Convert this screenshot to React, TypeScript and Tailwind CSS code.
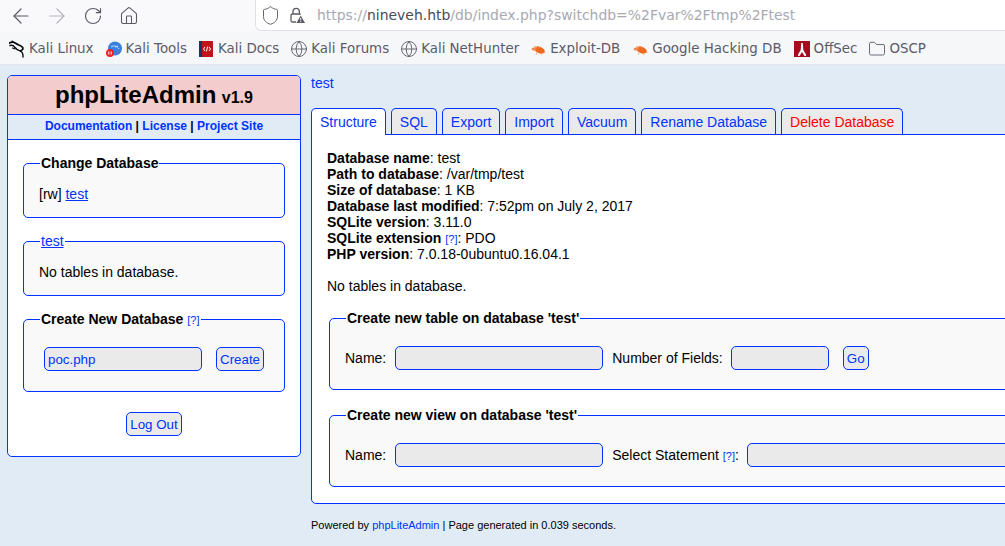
import { ArrowLeft, ArrowRight, Folder, Globe, Home, RotateCw, Shield } from "lucide-react";
import type { ReactNode } from "react";

function DragonIcon() {
  return (
    <svg viewBox="0 0 16 18" className="h-[18px] w-4 shrink-0" fill="none" stroke="#0c0c0c" strokeLinecap="round">
      <path d="M0.500 3c2-1.200 4.500-1 6.500.5 2 1.500 5 1.800 6.500 3.800 1 1.500 0 3-2 3.500" strokeWidth="1.700" />
      <path d="M1 5.500c2-.5 3.500 0 4.500 1.500 1.500 2 3.500 3.500 6 4.200 1.700.8 2.700 2.800 2.500 5.800" strokeWidth="1.400" />
      <path d="M3 1l2.500 1.800M3.500 8l2.500 1" strokeWidth="1.100" />
    </svg>
  );
}

function ToolsIcon() {
  return (
    <svg viewBox="0 0 16 16" className="h-4 w-4 shrink-0">
      <circle cx="9" cy="7.500" r="7" fill="#3a80e0" />
      <path d="M5 6c3-2 6-1 8 2M9 6l3-1" stroke="#cfe2fa" strokeWidth="0.900" fill="none" />
      <circle cx="4" cy="12" r="4" fill="#e8232a" />
      <path d="M2.800 10.500v3M5.200 10.500v3" stroke="#fff" strokeWidth="1" />
    </svg>
  );
}

function DocsIcon() {
  return (
    <svg viewBox="0 0 15 16" className="h-4 w-[15px] shrink-0">
      <rect x="0" y="0" width="14" height="16" rx="0.500" fill="#c0141c" />
      <rect x="0" y="0" width="3" height="16" fill="#1c2f6e" />
      <path d="M6 6L4.500 8 6 10M10 6l1.500 2L10 10M8.700 5.500L7.400 10.500" stroke="#fff" strokeWidth="1" fill="none" />
    </svg>
  );
}

function RoachIcon() {
  return (
    <svg viewBox="0 0 16 16" className="h-4 w-4 shrink-0">
      <ellipse cx="9.500" cy="9" rx="5.500" ry="3.300" fill="#ee6a1f" transform="rotate(20 9.500 9)" />
      <ellipse cx="4" cy="8" rx="2.500" ry="1.600" fill="#f28a4f" />
      <path d="M4 5l3 2M9 5.500l1 1.500M7 11.500L6 14M11 12l1 2M14 11l1.500 1" stroke="#f2a070" strokeWidth="0.800" fill="none" />
    </svg>
  );
}

function OffSecIcon() {
  return (
    <svg viewBox="0 0 16 16" className="h-4 w-4 shrink-0">
      <rect width="16" height="16" fill="#a50d1e" />
      <path d="M7.200 2h1.600l.5 7 2.700 4.500V15h-1.500L8 11l-2.500 4H4v-1.500L6.700 9z" fill="#fff" />
    </svg>
  );
}

function LockWarnIcon() {
  return (
    <svg viewBox="0 0 16 16" className="h-4 w-4" fill="none">
      <path d="M4 7V4.500a3.200 3.200 0 0 1 6.400 0V7" stroke="#5b5b66" strokeWidth="1.300" />
      <path d="M7 15H3.500A1.500 1.500 0 0 1 2 13.500v-5A1.500 1.500 0 0 1 3.500 7h7c.6 0 1 .2 1.200.5" stroke="#5b5b66" strokeWidth="1.300" />
      <path d="M11.700 8.500L16 16H7.400z" fill="#5b5b66" />
      <path d="M11.700 11v2.300M11.700 14.100v.9" stroke="#fff" strokeWidth="1" />
    </svg>
  );
}

const globe = <Globe size={18} strokeWidth={1.2} className="-mx-px shrink-0" />;

const bookmarks: { label: string; icon: ReactNode; left: string }[] = [
  { label: "Kali Linux", icon: <DragonIcon />, left: "ml-[9px]" },
  { label: "Kali Tools", icon: <ToolsIcon />, left: "ml-[12px]" },
  { label: "Kali Docs", icon: <DocsIcon />, left: "ml-[12px]" },
  { label: "Kali Forums", icon: globe, left: "ml-[12px]" },
  { label: "Kali NetHunter", icon: globe, left: "ml-[12px]" },
  { label: "Exploit-DB", icon: <RoachIcon />, left: "ml-[11px]" },
  { label: "Google Hacking DB", icon: <RoachIcon />, left: "ml-[12px]" },
  { label: "OffSec", icon: <OffSecIcon />, left: "ml-[12px]" },
  { label: "OSCP", icon: <Folder size={18} strokeWidth={1.2} className="-mx-px shrink-0" />, left: "ml-[12px]" },
];

const tabs = ["SQL", "Export", "Import", "Vacuum", "Rename Database"];

function BrowserChrome() {
  return (
    <div className="shrink-0 font-['DejaVu_Sans',sans-serif] text-[#5b5b66]">
      <div className="flex h-[31px] items-center bg-[#f9f9fb]">
        <div className="flex w-[255px] items-center pl-[9px]">
          <ArrowLeft size={24} strokeWidth={1.2} />
          <ArrowRight size={24} strokeWidth={1.2} className="ml-[12px] text-[#b4b4ba]" />
          <RotateCw size={20} strokeWidth={1.4} className="ml-[14px]" />
          <Home size={20} strokeWidth={1.3} className="ml-[16px]" />
        </div>
        <div className="flex h-[31px] flex-1 items-center rounded-bl-md border-b border-l border-[#dfe1e8] bg-white pl-[4px]">
          <Shield size={21} strokeWidth={1.1} />
          <span className="ml-[8px]"><LockWarnIcon /></span>
          <span className="ml-[12px] whitespace-nowrap text-[13.95px] text-[#a9a9b2]">
            https://<span className="text-[#4a4a54]">nineveh.htb</span>/db/index.php?switchdb=%2Fvar%2Ftmp%2Ftest
          </span>
        </div>
      </div>
      <div className="flex h-[34px] items-center border-b border-[#e3e5ea] bg-[#f6f7f9] pt-[4px] text-[13.4px]">
        {bookmarks.map((b) => (
          <div key={b.label} className={`flex items-center gap-[4px] whitespace-nowrap ${b.left}`}>
            {b.icon}
            <span>{b.label}</span>
          </div>
        ))}
      </div>
    </div>
  );
}

function Box({ legend, className, children }: { legend: ReactNode; className: string; children: ReactNode }) {
  return (
    <fieldset className={`rounded-[5px] border border-[#0033ff] bg-[#f9f9f9] ${className}`}>
      <legend className="ml-[1px] px-[1px] text-[14px] leading-[16px] font-bold">{legend}</legend>
      {children}
    </fieldset>
  );
}

function Help() {
  return <a className="text-[11px] leading-none font-normal text-[#0033ff]">[?]</a>;
}

const inputClass = "box-border h-[24px] rounded-[5px] border border-[#0033ff] bg-[#eaeaea] px-[3px] text-[13.33px] text-[#0033ff]";
const buttonClass = "box-border h-[24px] rounded-[5px] border border-[#0033ff] bg-[#eaeaea] px-[3px] pt-[1px] text-[13.33px] text-[#0033ff]";

function Sidebar() {
  return (
    <aside className="h-[382px] w-[294px] shrink-0 overflow-hidden rounded-[5px] border border-[#0033ff] bg-white">
      <div className="h-[39px] border-b border-[#0033ff] bg-[#f3cdcd] text-center leading-[38px] font-bold">
        <span className="text-[24px]">phpLiteAdmin</span> <span className="ml-[1px] text-[16px]">v1.9</span>
      </div>
      <div className="h-[25px] border-b border-[#0033ff] bg-[#e0ebf6] text-center text-[12px] leading-[23px] font-bold">
        <a className="text-[#0033ff]">Documentation</a> | <a className="text-[#0033ff]">License</a> |{" "}
        <a className="text-[#0033ff]">Project Site</a>
      </div>
      <div className="px-[15px] pt-[15px]">
        <Box legend="Change Database" className="h-[63px] px-[15px]">
          <div className="pt-[15px] text-[14px] leading-[16px]">
            [rw] <a className="text-[#0033ff] underline">test</a>
          </div>
        </Box>
        <Box legend={<a className="font-normal text-[#0033ff] underline">test</a>} className="mt-[15px] h-[63px] px-[15px]">
          <div className="pt-[15px] text-[14px] leading-[16px]">No tables in database.</div>
        </Box>
        <Box
          legend={<>Create New Database <Help /></>}
          className="mt-[15px] h-[81px] px-[15px]"
        >
          <div className="flex items-center pt-[20px] pl-[5px]">
            <input readOnly value="poc.php" className={`${inputClass} w-[158px]`} />
            <button className={`${buttonClass} ml-[14px] w-[48px]`}>Create</button>
          </div>
        </Box>
        <div className="mt-[20px] flex justify-center">
          <button className={`${buttonClass} w-[56px]`}>Log Out</button>
        </div>
      </div>
    </aside>
  );
}

function Main() {
  return (
    <main className="ml-[10px] w-[760px] shrink-0">
      <a className="block text-[14px] leading-[16px] text-[#0033ff]">test</a>
      <div className="relative z-10 mt-[17px] flex gap-[5px] text-[14px]">
        <div className="-mb-px box-border h-[27px] rounded-t-[5px] border border-b-0 border-[#0033ff] bg-white px-[8px] leading-[27px] text-[#0033ff]">
          Structure
        </div>
        {tabs.map((t) => (
          <div key={t} className="box-border h-[26px] rounded-t-[5px] border border-b-0 border-[#0033ff] bg-[#eaeaea] px-[8px] leading-[27px] text-[#0033ff]">
            {t}
          </div>
        ))}
        <div className="box-border h-[26px] rounded-t-[5px] border border-b-0 border-[#0033ff] bg-[#eaeaea] px-[8px] leading-[27px] text-[#ff0000]">
          Delete Database
        </div>
      </div>
      <section className="box-border h-[370px] rounded-bl-[5px] border border-[#0033ff] bg-white pt-[15px] pl-[15px] text-[14px] leading-[16px]">
        <div><b>Database name</b>: test</div>
        <div><b>Path to database</b>: /var/tmp/test</div>
        <div><b>Size of database</b>: 1 KB</div>
        <div><b>Database last modified</b>: 7:52pm on July 2, 2017</div>
        <div><b>SQLite version</b>: 3.11.0</div>
        <div><b>SQLite extension</b> <Help />: PDO</div>
        <div><b>PHP version</b>: 7.0.18-0ubuntu0.16.04.1</div>
        <div className="mt-[16px]">No tables in database.</div>
        <Box legend="Create new table on database 'test'" className="mt-[16px] ml-[2px] h-[80px] w-[760px] pl-[15px]">
          <div className="flex items-center pt-[20px]">
            <span>Name:</span>
            <input readOnly className={`${inputClass} ml-[9px] w-[208px]`} />
            <span className="ml-[9px]">Number of Fields:</span>
            <input readOnly className={`${inputClass} ml-[8px] w-[98px]`} />
            <button className={`${buttonClass} ml-[14px] w-[26px]`}>Go</button>
          </div>
        </Box>
        <Box legend="Create new view on database 'test'" className="mt-[17px] ml-[2px] h-[80px] w-[760px] pl-[15px]">
          <div className="flex items-center pt-[20px]">
            <span>Name:</span>
            <input readOnly className={`${inputClass} ml-[9px] w-[208px]`} />
            <span className="ml-[9px]">Select Statement <Help />:</span>
            <input readOnly className={`${inputClass} ml-[8px] w-[300px]`} />
          </div>
        </Box>
      </section>
      <div className="mt-[15px] text-[11px] leading-[13px]">
        Powered by <a className="text-[#0033ff]">phpLiteAdmin</a> | Page generated in 0.039 seconds.
      </div>
    </main>
  );
}

export default function App() {
  return (
    <div className="flex h-[546px] w-[1005px] flex-col overflow-hidden bg-[#e0ebf6] font-['Liberation_Sans',Arial,sans-serif] text-black">
      <BrowserChrome />
      <div className="flex pt-[10px] pl-[7px]">
        <Sidebar />
        <Main />
      </div>
    </div>
  );
}
